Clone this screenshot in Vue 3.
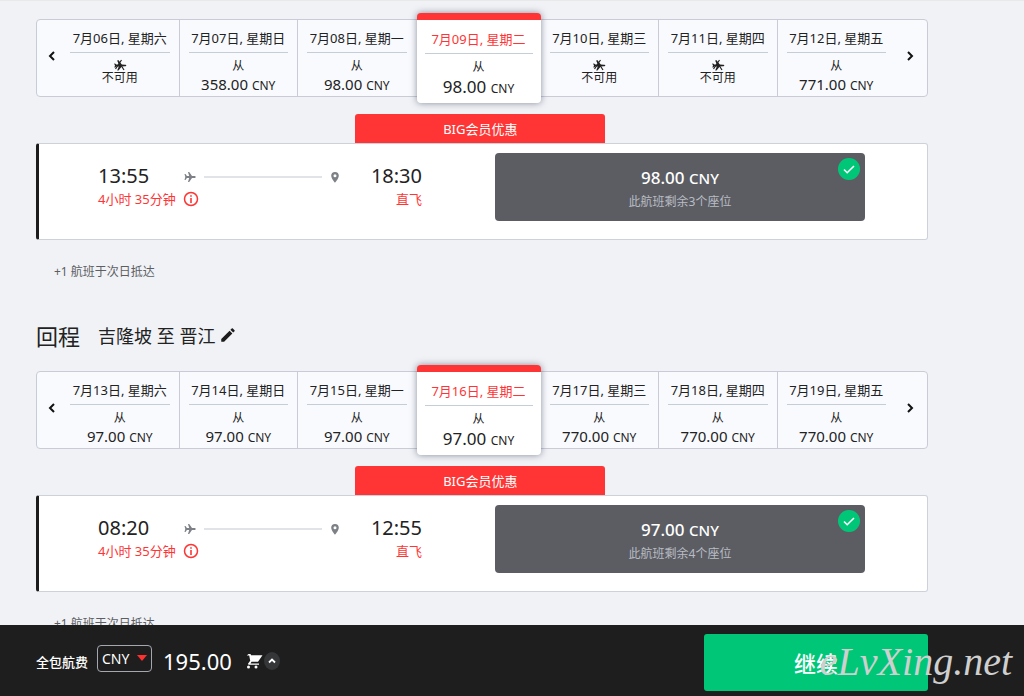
<template>
  <div class="page">
    <main class="content">
      <section v-for="trip in trips" :key="trip.id" class="trip">
        <h2 v-if="trip.title" class="heading">
          <span class="heading-title">{{ trip.title }}</span>
          <span class="heading-route">{{ trip.route }}</span>
          <button type="button" class="edit" aria-label="edit">
            <svg viewBox="0 0 24 24" width="18" height="18">
              <path fill="#1c1c1c" d="M3 17.2V21h3.800L17.800 9.900l-3.700-3.700zM20.700 7c.4-.4.4-1 0-1.400l-2.300-2.300c-.4-.4-1-.4-1.400 0l-1.800 1.800 3.700 3.700z" />
            </svg>
          </button>
        </h2>

        <div class="strip">
          <button type="button" class="nav prev" aria-label="prev">
            <svg viewBox="0 0 8 10" width="8" height="10">
              <path d="M6 1L2 5l4 4" fill="none" stroke="#111" stroke-width="2" />
            </svg>
          </button>
          <button
            v-for="(day, i) in trip.days"
            :key="day.date"
            type="button"
            class="day"
            :class="{ active: i === 3, plain: i === 2 || i === 6 }"
          >
            <span class="date">{{ day.date }}</span>
            <template v-if="day.price">
              <span class="from">从</span>
              <span class="price">{{ day.price }} <small>CNY</small></span>
            </template>
            <template v-else>
              <svg class="no-flight" viewBox="0 0 14 12" width="14" height="12">
                <path fill="#222" d="M1 4.500l1.500.2.800.9h2.500L4.200 1.500h1.300L8.800 5.600l3.200.1c1 .1 1.300.5 1.300.8s-.4.7-1.300.8l-3.200.1-3.300 4.100H4.200l1.600-4.100H3.300l-.9 1H1.300L2 6.500z" />
                <path d="M2.500 10L8.500 1M5 1.500l6 9.500" stroke="#222" stroke-width="1.200" />
              </svg>
              <span class="none">不可用</span>
            </template>
          </button>
          <button type="button" class="nav next" aria-label="next">
            <svg viewBox="0 0 8 10" width="8" height="10">
              <path d="M2 1l4 4-4 4" fill="none" stroke="#111" stroke-width="2" />
            </svg>
          </button>
        </div>

        <div class="banner">BIG会员优惠</div>
        <div class="card">
          <div class="flight">
            <div class="depart">
              <span class="time">{{ trip.depart }}</span>
              <span class="detail">
                4小时 35分钟
                <svg viewBox="0 0 16 16" width="16" height="16">
                  <circle cx="8" cy="8" r="6.500" fill="none" stroke="#ff3535" stroke-width="1.500" />
                  <path d="M7.200 4.200h1.600v1.600H7.200zM7.200 7h1.600v5H7.200z" fill="#ff3535" />
                </svg>
              </span>
            </div>
            <div class="path">
              <svg viewBox="0 0 12 10" width="12" height="10">
                <path fill="#7d8187" d="M.5 2h1l1.400 2h2.300L4 0h1.200L8 4h2.500c.8 0 1.200.5 1.200 1s-.4 1-1.200 1H8l-2.800 4H4l1.200-4H2.900L1.500 8h-1l.8-3z" />
              </svg>
              <i></i>
              <svg viewBox="0 0 10 12" width="10" height="12">
                <path fill="#7d8187" fill-rule="evenodd" d="M5 1a3.800 3.800 0 0 0-3.800 3.800C1.200 7.500 5 11.800 5 11.800s3.800-4.300 3.800-7A3.800 3.800 0 0 0 5 1zm0 2.300a1.500 1.500 0 1 1 0 3 1.500 1.500 0 0 1 0-3z" />
              </svg>
            </div>
            <div class="arrive">
              <span class="time">{{ trip.arrive }}</span>
              <span class="detail">直飞</span>
            </div>
          </div>
          <button type="button" class="fare">
            <span class="fare-price">{{ trip.fare }} <small>CNY</small></span>
            <span class="seats">此航班剩余{{ trip.seats }}个座位</span>
            <svg class="check" viewBox="0 0 22 22" width="22" height="22">
              <circle cx="11" cy="11" r="11" fill="#00c778" />
              <path d="M6 11.500l3.200 3.200L16 8" fill="none" stroke="#fff" stroke-width="1.600" />
            </svg>
          </button>
        </div>
        <p class="note">+1 航班于次日抵达</p>
      </section>
    </main>

    <footer class="bar">
      <div class="total">
        <label for="currency">全包航费</label>
        <div class="currency">
          <select id="currency" v-model="currency">
            <option>CNY</option>
          </select>
          <svg viewBox="0 0 10 6" width="10" height="6">
            <path d="M0 0h10L5 6z" fill="#ff3030" />
          </svg>
        </div>
        <span class="sum">195.00</span>
        <button type="button" class="cart" aria-label="cart">
          <svg viewBox="0 0 17 16" width="17" height="16">
            <path d="M2.500 1h2l.6 1.200H16.500L12 8.800H5.500l-1 1.600h8.500v1.400H2.500l-.5-1 2.200-3L3.200 2.400H.8z" fill="#fff" />
            <circle cx="2.500" cy="14" r="1.500" fill="#fff" />
            <circle cx="10" cy="14" r="1.500" fill="#fff" />
          </svg>
          <svg viewBox="0 0 16 18" width="16" height="18">
            <ellipse cx="8" cy="9" rx="8" ry="9" fill="#343638" />
            <path d="M5 10.500l3-3 3 3" fill="none" stroke="#fff" stroke-width="1.800" />
          </svg>
        </button>
      </div>
      <button type="button" class="continue">继续</button>
      <span class="watermark">eLvXing.net</span>
    </footer>
  </div>
</template>

<script setup>
import { ref } from 'vue'

const currency = ref('CNY')

// 去程和回程
const trips = [
  {
    id: 'out',
    days: [
      { date: '7月06日, 星期六' },
      { date: '7月07日, 星期日', price: '358.00' },
      { date: '7月08日, 星期一', price: '98.00' },
      { date: '7月09日, 星期二', price: '98.00' },
      { date: '7月10日, 星期三' },
      { date: '7月11日, 星期四' },
      { date: '7月12日, 星期五', price: '771.00' }
    ],
    depart: '13:55',
    arrive: '18:30',
    fare: '98.00',
    seats: 3
  },
  {
    id: 'back',
    title: '回程',
    route: '吉隆坡 至 晋江',
    days: [
      { date: '7月13日, 星期六', price: '97.00' },
      { date: '7月14日, 星期日', price: '97.00' },
      { date: '7月15日, 星期一', price: '97.00' },
      { date: '7月16日, 星期二', price: '97.00' },
      { date: '7月17日, 星期三', price: '770.00' },
      { date: '7月18日, 星期四', price: '770.00' },
      { date: '7月19日, 星期五', price: '770.00' }
    ],
    depart: '08:20',
    arrive: '12:55',
    fare: '97.00',
    seats: 4
  }
]
</script>

<style>
body {
  background: #f1f2f6;
}
</style>

<style scoped>
.page {
  font-family: 'Noto Sans', 'Noto Sans CJK SC', sans-serif;
  font-size: 13px;
  color: #222;
  border-top: 1px solid #e8eaea;
}

.page * {
  box-sizing: border-box;
}

button {
  font: inherit;
  color: inherit;
  background: none;
  border: 0;
  padding: 0;
  cursor: pointer;
}

svg {
  display: block;
  flex: none;
}

.content {
  padding: 18px 96px 0 36px;
}

/* 回程标题 */
.heading {
  display: flex;
  align-items: center;
  margin: 38px 0 21px;
  height: 30px;
  font-weight: 400;
}

.heading-title {
  font-size: 22px;
  margin-right: 18px;
}

.heading-route {
  font-size: 18px;
  margin-right: 4px;
}

/* 日期栏 */
.strip {
  display: flex;
  height: 78px;
  background: #f9fafe;
  border: 1px solid #c9ccd6;
  border-radius: 4px;
}

.nav {
  display: flex;
  align-items: center;
  padding-bottom: 4px;
}

.prev {
  width: 24px;
  padding-left: 11px;
}

.next {
  width: 31px;
  padding-left: 10px;
}

.day {
  flex: 1 1 0;
  min-width: 0;
  display: flex;
  flex-direction: column;
  align-items: center;
  justify-content: flex-start;
  padding: 8px 9px 0;
  border-right: 1px solid #c9ccd6;
}

.day.plain {
  border-right-color: transparent;
}

.day.active {
  flex: 0 0 124px;
  margin: -7px 0;
  padding: 9px 8px 0;
  background: #fff;
  border: 0;
  border-top: 7px solid #ff3535;
  border-radius: 4px;
  box-shadow: 0 0 7px rgba(60, 70, 90, 0.6);
}

.date {
  align-self: stretch;
  height: 25px;
  line-height: 20px;
  border-bottom: 1px solid #c5cdd6;
  white-space: nowrap;
}

.active .date {
  color: #ff3535;
}

.from {
  margin-top: 4px;
  font-size: 12px;
  line-height: 18px;
}

.price {
  font-size: 15px;
  line-height: 18px;
  white-space: nowrap;
}

.price small {
  font-size: 12px;
}

.active .price {
  font-size: 17px;
  line-height: 22px;
}

.no-flight {
  margin-top: 6px;
}

.none {
  font-size: 12px;
  line-height: 14px;
}

/* 航班 */
.banner {
  width: 250px;
  height: 29px;
  margin: 17px 0 0 35.8%;
  line-height: 31px;
  text-align: center;
  color: #fff;
  background: #ff3535;
  border-radius: 3px 3px 0 0;
}

.card {
  display: flex;
  align-items: flex-start;
  justify-content: space-between;
  min-height: 97px;
  padding: 9px 62px 0 59px;
  background: #fff;
  border: 1px solid #cdd1da;
  border-left: 3px solid #1c1c1c;
  border-radius: 3px;
}

.flight {
  display: flex;
  flex: 0 1 324px;
  padding-top: 9px;
}

.depart,
.arrive {
  display: flex;
  flex-direction: column;
}

.depart {
  width: 86px;
}

.arrive {
  width: 82px;
  align-items: flex-end;
}

.time {
  font-size: 20px;
  line-height: 28px;
}

.detail {
  display: flex;
  align-items: center;
  gap: 7px;
  line-height: 18px;
  color: #ff3535;
  white-space: nowrap;
}

.path {
  flex: 1;
  display: flex;
  align-items: center;
  gap: 8px;
  height: 30px;
}

.path i {
  flex: 1;
  height: 2px;
  background: #e0e3e7;
}

.fare {
  position: relative;
  display: flex;
  flex-direction: column;
  align-items: center;
  width: 370px;
  height: 68px;
  padding-top: 12px;
  color: #fff;
  background: #5b5d63;
  border-radius: 4px;
}

.fare-price {
  font-size: 17px;
  font-weight: 500;
  line-height: 26px;
}

.fare-price small {
  font-size: 15px;
}

.seats {
  font-size: 12px;
  line-height: 22px;
  color: #b9bcc4;
}

.check {
  position: absolute;
  top: 5px;
  right: 5px;
}

.note {
  margin: 22px 0 0;
  padding-left: 18px;
  font-size: 12px;
  line-height: 20px;
  color: #5c5e63;
}

/* 底部结算栏 */
.bar {
  position: fixed;
  left: 0;
  right: 0;
  bottom: 0;
  display: flex;
  align-items: center;
  justify-content: space-between;
  height: 71px;
  padding: 3px 96px 0 36px;
  color: #fff;
  background: #1e1e1e;
}

.total {
  display: flex;
  align-items: center;
  padding-bottom: 2px;
}

.total label {
  font-weight: 500;
}

.currency {
  position: relative;
  margin: 0 11px 6px 9px;
}

.currency select {
  display: block;
  appearance: none;
  width: 55px;
  height: 27px;
  padding: 0 4px;
  font: inherit;
  font-size: 14px;
  color: #fff;
  background: #1e1e1e;
  border: 1px solid #a4a7ad;
  border-radius: 4px;
}

.currency svg {
  position: absolute;
  top: 10px;
  right: 5px;
  pointer-events: none;
}

.sum {
  font-size: 22px;
}

.cart {
  display: flex;
  align-items: center;
  gap: 1px;
  margin-left: 14px;
}

.continue {
  width: 224px;
  height: 57px;
  font-size: 22px;
  font-weight: 500;
  background: #00c778;
  border-radius: 3px;
}

.watermark {
  position: absolute;
  right: 12px;
  bottom: 10px;
  font-family: 'Liberation Serif', serif;
  font-size: 40px;
  font-style: italic;
  line-height: 48px;
  color: #cfcfcf;
  pointer-events: none;
}
</style>
